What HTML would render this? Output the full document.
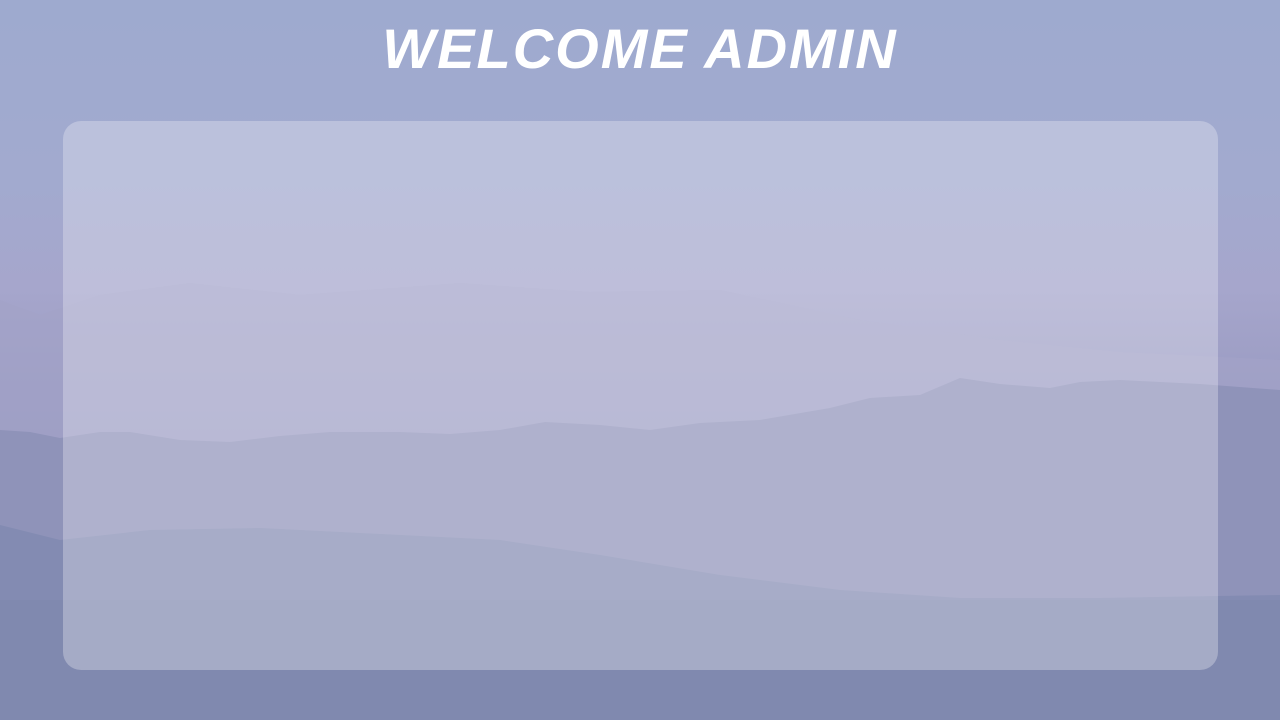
<!DOCTYPE html>
<html><head><style>
html,body{margin:0;padding:0;width:1280px;height:720px;overflow:hidden}
body{position:relative;background:linear-gradient(180deg,#9eaacf 0%,#a2aacf 25%,#a6a6cc 40%,#9a9bc2 55%,#8b90b8 75%,#7e88ae 100%)}
svg.bg{position:absolute;left:0;top:0}
h1{position:absolute;left:0;width:1280px;top:17px;margin:0;text-align:center;font-family:"Liberation Sans",sans-serif;font-style:italic;font-weight:bold;font-size:56px;letter-spacing:2px;color:#fff;line-height:64px}
.panel{position:absolute;left:63px;top:121px;width:1155px;height:549px;border-radius:18px;background:rgba(240,240,245,0.33)}
</style></head><body>
<svg class="bg" width="1280" height="720">
<path d="M0 300 L40 315 L100 295 L190 283 L300 295 L460 283 L590 292 L720 290 L860 320 L1000 340 L1120 352 L1280 360 L1280 720 L0 720Z" fill="#a3a2c8" opacity="0.7"/>
<path d="M0 430 L30 432 L60 438 L100 432 L130 432 L180 440 L230 442 L280 436 L330 432 L400 432 L450 434 L500 430 L545 422 L600 425 L650 430 L700 423 L760 420 L830 408 L870 398 L920 395 L960 378 L1000 384 L1050 388 L1080 382 L1120 380 L1200 384 L1280 390 L1280 720 L0 720Z" fill="#8f93b9"/>
<path d="M0 525 L60 540 L150 530 L260 528 L400 535 L500 540 L600 555 L720 575 L840 590 L960 598 L1100 598 L1280 595 L1280 720 L0 720Z" fill="#838bb2"/>
<rect x="0" y="600" width="1280" height="120" fill="#7e88ae" opacity="0.6"/>
</svg>
<h1>WELCOME ADMIN</h1>
<div class="panel"></div>
</body></html>
